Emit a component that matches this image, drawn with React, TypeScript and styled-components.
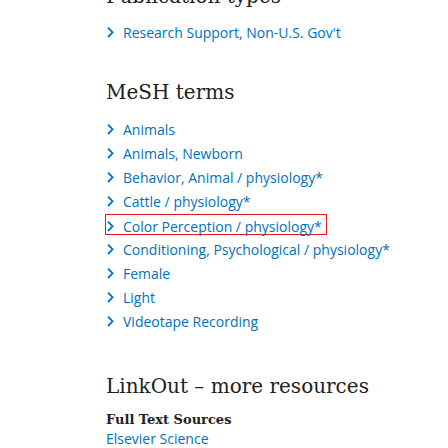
import React from "react";
import styled, { createGlobalStyle } from "styled-components";

const Global = createGlobalStyle`
  html, body { margin: 0; padding: 0; background: #fff; }
  body { overflow: hidden; }
`;

const Page = styled.div`
  width: 448px;
  height: 448px;
  overflow: hidden;
  padding-left: 106px;
  box-sizing: border-box;
`;

const Section = styled.section<{ $top?: number }>`
  margin-top: ${(p) => p.$top ?? 0}px;
`;

const Heading = styled.h2<{ $mb?: number }>`
  margin: 0 0 ${(p) => p.$mb ?? 0}px 0;
  font-family: "DejaVu Serif", "Liberation Serif", serif;
  font-weight: 400;
  font-size: 20px;
  line-height: 28px;
  color: #212121;
`;

const SubHeading = styled.h3`
  margin: 0;
  font-family: "DejaVu Serif", "Liberation Serif", serif;
  font-weight: 700;
  font-size: 13px;
  line-height: 18px;
  color: #212121;
`;

const List = styled.ul`
  list-style: none;
  margin: 0;
  padding: 0;
`;

const Item = styled.li<{ $marked?: boolean }>`
  display: flex;
  align-items: flex-start;
  width: fit-content;
  box-sizing: border-box;
  height: ${(p) => (p.$marked ? "21px" : "24px")};
  margin: ${(p) => (p.$marked ? "0 0 3px -1px" : "0")};
  padding: ${(p) => (p.$marked ? "0 4px 0 0" : "0")};
  border: ${(p) => (p.$marked ? "1px solid #e8161b" : "none")};
`;

const Chevron = styled.svg`
  width: 8px;
  height: 11px;
  margin: 6px 9px 0 0;
  flex: none;
`;

const LinkText = styled.span`
  font-family: "Open Sans", "Noto Sans", sans-serif;
  font-size: 14px;
  line-height: 24px;
  color: #0071bc;
  white-space: nowrap;
`;

const PlainLink = styled.a`
  display: block;
  font-family: "Open Sans", "Noto Sans", sans-serif;
  font-size: 14px;
  line-height: 20px;
  color: #0071bc;
  text-decoration: none;
`;

const Arrow = () => (
  <Chevron viewBox="0 0 8 11">
    <path d="M2 0.6 L6.6 5.3 L2 10" fill="none" stroke="#0a6fb8" strokeWidth="1.8" />
  </Chevron>
);

const mesh = [
  "Animals",
  "Animals, Newborn",
  "Behavior, Animal / physiology*",
  "Cattle / physiology*",
  "Color Perception / physiology*",
  "Conditioning, Psychological / physiology*",
  "Female",
  "Light",
  "Videotape Recording",
];

export default function App() {
  return (
    <>
      <Global />
      <Page>
        <Section $top={-18}>
          <Heading $mb={11}>Publication types</Heading>
          <List>
            <Item>
              <Arrow />
              <LinkText>Research Support, Non-U.S. Gov't</LinkText>
            </Item>
          </List>
        </Section>
        <Section $top={33}>
          <Heading $mb={12}>MeSH terms</Heading>
          <List>
            {mesh.map((m) => (
              <Item key={m} $marked={m.startsWith("Color")}>
                <Arrow />
                <LinkText>{m}</LinkText>
              </Item>
            ))}
          </List>
        </Section>
        <Section $top={38}>
          <Heading $mb={11}>LinkOut – more resources</Heading>
          <SubHeading>Full Text Sources</SubHeading>
          <PlainLink href="#">Elsevier Science</PlainLink>
        </Section>
      </Page>
    </>
  );
}
